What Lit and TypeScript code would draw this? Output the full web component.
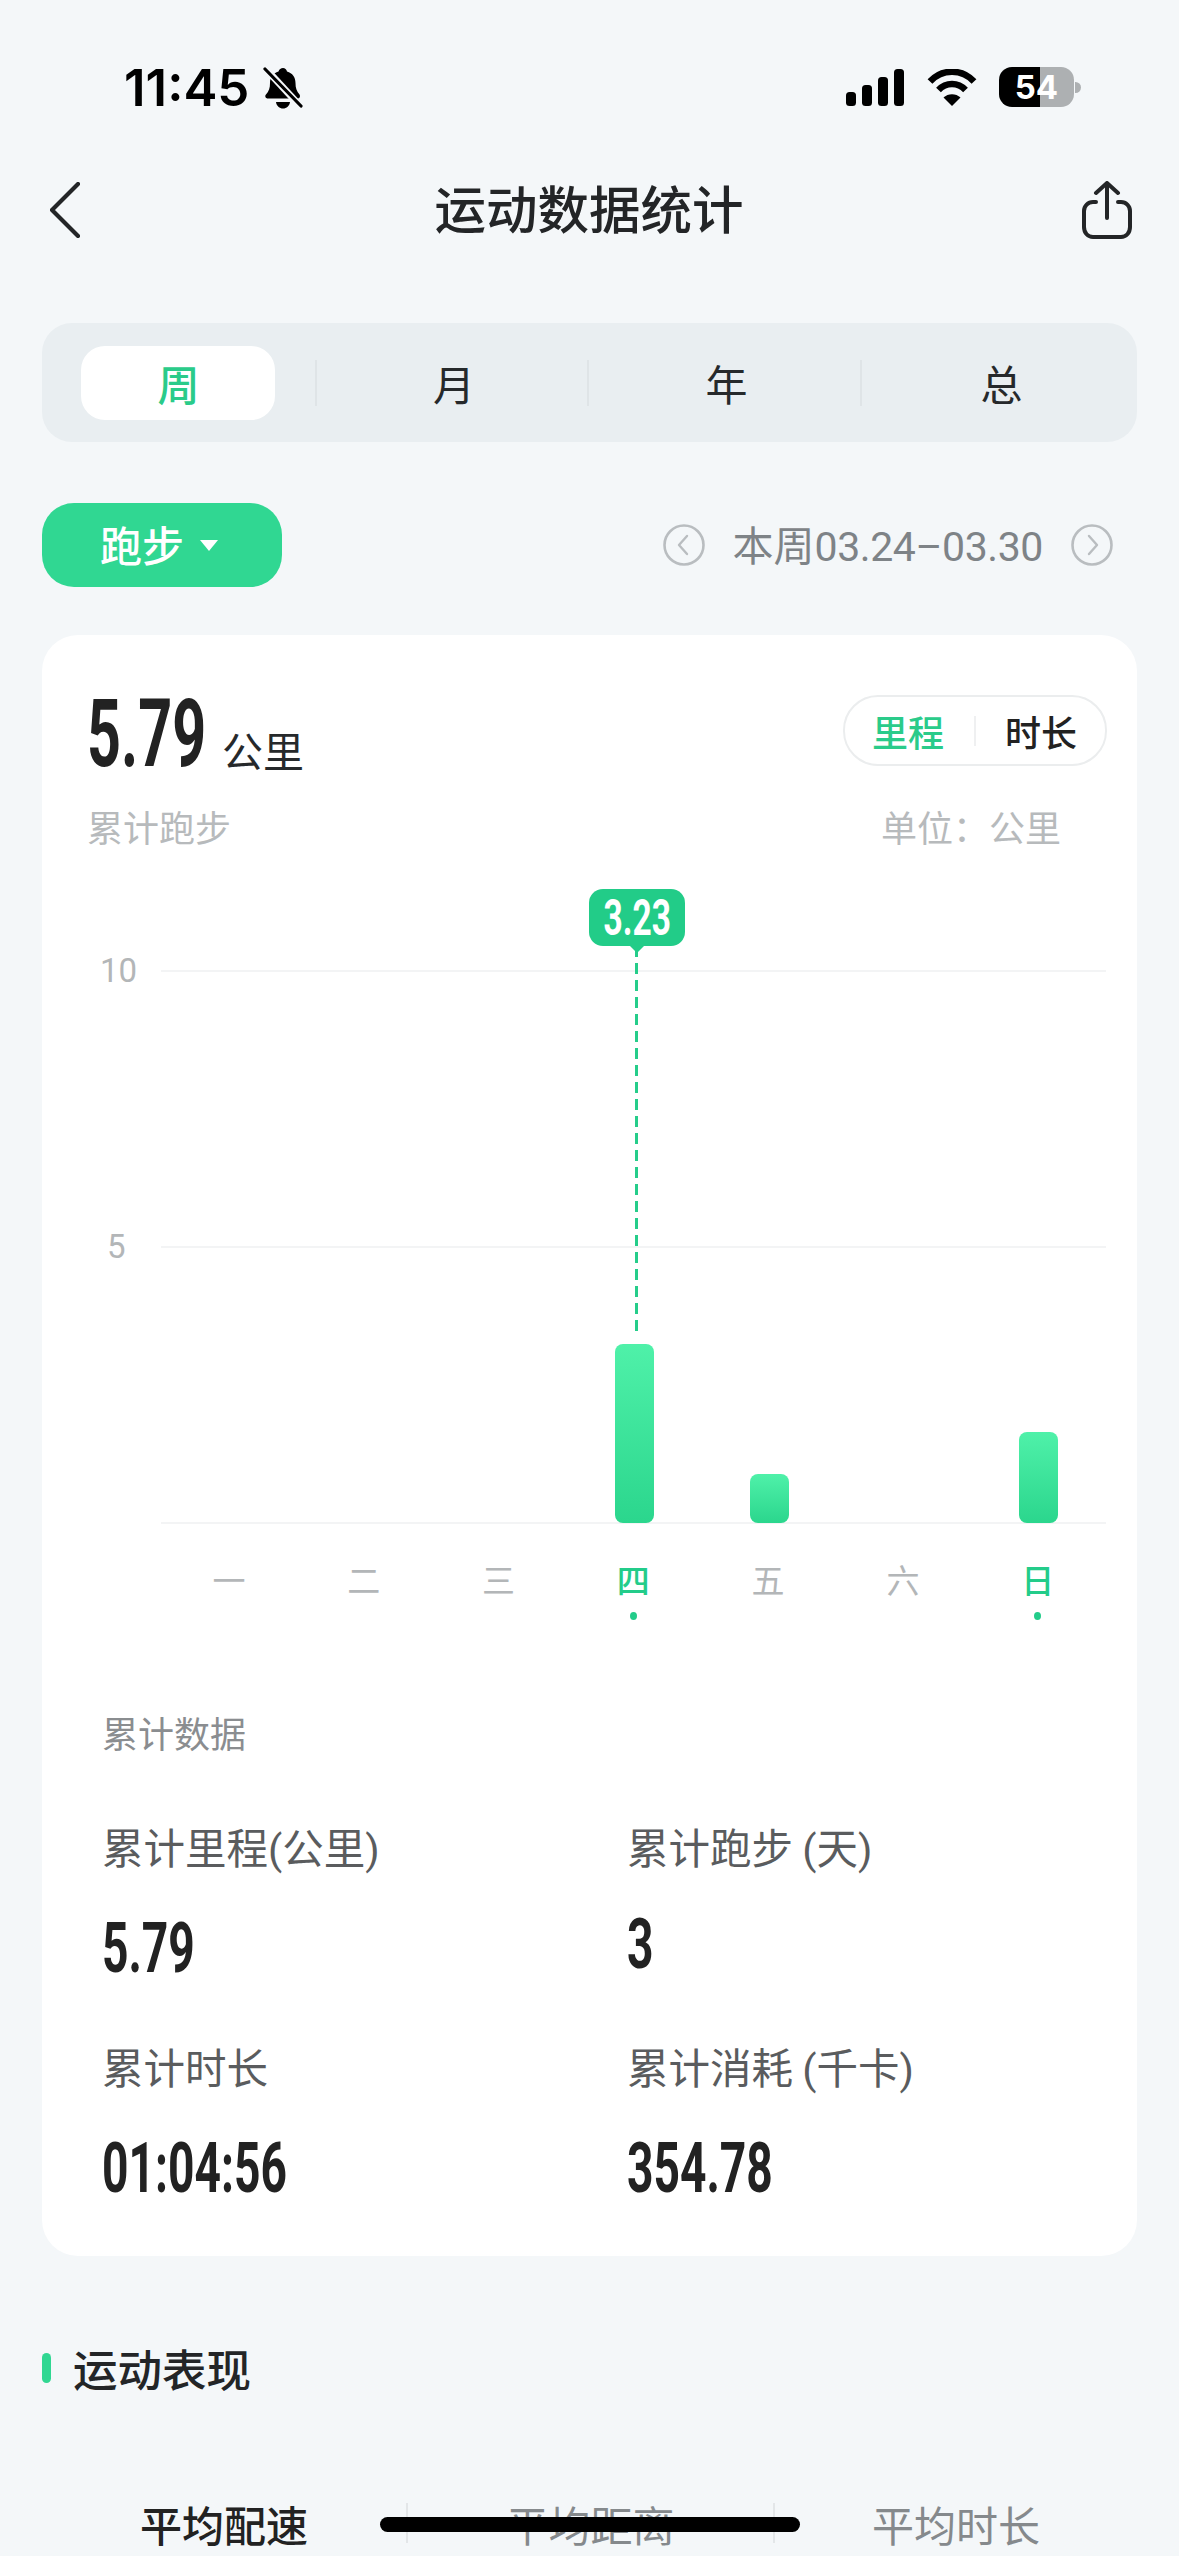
import { LitElement, html, css, svg } from "lit";
import { customElement } from "lit/decorators.js";

const bars: Record<number, number> = { 3: 179, 4: 49, 6: 91 };
const days = ["一", "二", "三", "四", "五", "六", "日"];

@customElement("app-root")
export class AppRoot extends LitElement {
  static styles = css`
    :host { display: block; width: 1179px; height: 2556px; overflow: hidden; position: relative; background: #f4f7f9;
      font-family: "Noto Sans CJK SC", "Inter", sans-serif; color: #222; }
    svg { display: block; }
    .status { height: 174px; box-sizing: border-box; padding: 67px 98px 0 124px; display: flex; justify-content: space-between; align-items: flex-start; }
    .st-left { display: flex; align-items: center; gap: 14px; height: 42px; }
    .time { font: 600 51px/42px "Inter", sans-serif; color: #000; }
    .st-right { display: flex; align-items: center; height: 40px; }
    .signal { margin-right: 23px; }
    .wifi { margin-right: 22px; }
    .batt { width: 75px; height: 40px; border-radius: 13px; background: linear-gradient(90deg, #000 0 41px, #adb0b2 41px); color: #fff;
      font: 700 33px/40px "Inter", sans-serif; text-align: center; }
    .tip { width: 6px; height: 11px; background: #adb0b2; border-radius: 0 6px 6px 0; margin-left: 1px; }

    .header { height: 72px; display: flex; align-items: center; justify-content: space-between; padding: 0 47px 0 50px; }
    .title { font-size: 51.5px; font-weight: 500; line-height: 66px; margin: 0 0 6px 16px; color: #232527; }

    .seg { margin: 77px 42px 0; height: 119px; border-radius: 30px; background: #e9eef1; display: grid; grid-template-columns: 273px 272px 273px 1fr; align-items: center; position: relative; }
    .seg-item { display: flex; align-items: center; justify-content: center; font-size: 42px; height: 46px; color: #26292b; border-left: 2px solid #dfe4e7; }
    .seg-item span { position: relative; left: 2px; }
    .seg-item:first-child { border-left: 0; position: relative; color: #2acb8a; font-weight: 500; }
    .seg-item:first-child span { left: 0; }
    .seg-item:first-child::before { content: ""; position: absolute; left: 39px; top: -14px; width: 194px; height: 74px; border-radius: 24px; background: #fff; }

    .tools { margin: 61px 42px 0; height: 84px; display: flex; justify-content: space-between; align-items: center; }
    .run { width: 240px; height: 84px; box-sizing: border-box; padding: 0 6px 3px 0; border-radius: 32px; background: #30d792; color: #fff; display: flex; align-items: center; justify-content: center; gap: 16px; font-size: 42px; font-weight: 500; }
    .caret { width: 0; height: 0; border-left: 9px solid transparent; border-right: 9px solid transparent; border-top: 11px solid #fff; margin-top: 3px; }
    .date { display: flex; align-items: center; margin-right: 24px; color: #7e8387; }
    .date-t { font: 400 41px/1 "Roboto", "Noto Sans CJK SC", sans-serif; margin: 0 28px; white-space: nowrap; letter-spacing: -0.4px; }
    .date-t b { font: 400 41px/1 "Noto Sans CJK SC", sans-serif; letter-spacing: 0; }

    .card { margin: 48px 42px 0; height: 1621px; border-radius: 36px; background: #fff; position: relative; box-sizing: border-box; }
    .cond { display: block; font-family: "Roboto", sans-serif; font-weight: 700; transform: scaleX(0.65); transform-origin: left center; color: #222; white-space: nowrap; }
    .head { display: flex; justify-content: space-between; padding: 60px 30px 0 45px; align-items: flex-start; height: 71px; }
    .big { display: flex; align-items: flex-end; }
    .big .cond { font-size: 94px; line-height: 72px; width: 135px; transform: translateY(3px) scaleX(0.63); }
    .unit { font-size: 41px; line-height: 44px; color: #26292b; margin-bottom: -4px; }
    .toggle { width: 264px; height: 71px; box-sizing: border-box; border: 2px solid #ebedee; border-radius: 35px; display: flex; align-items: center; padding-left: 27px; font-size: 36px; font-weight: 500; }
    .toggle .on { color: #2acb8a; }
    .toggle i { width: 2px; height: 30px; background: #eff0f1; margin: 0 29px 0 30px; }
    .sub { display: flex; justify-content: space-between; padding: 38px 76px 0 45px; font-size: 36px; line-height: 44px; color: #b7babc; }
    .chart { position: relative; margin-top: 123px; height: 552px; }
    .row { display: flex; align-items: flex-start; height: 276px; }
    .ylab { width: 119px; box-sizing: border-box; padding-left: 58px; height: 0; font: 400 33px/0 "Roboto", sans-serif; color: #b3b6b8; }
    .ylab.five { padding-left: 65px; }
    .line { height: 2px; background: #f3f4f5; width: 945px; margin-top: -1px; }
    .base { display: flex; padding-left: 119px; }
    .overlay { position: absolute; left: 119px; bottom: 0; width: 945px; height: 552px; display: grid; grid-template-columns: repeat(7, 134.8px); margin-left: 2px; align-items: end; }
    .slot { display: flex; justify-content: center; margin-left: -1px; }
    .bar { width: 39px; border-radius: 8px; background: linear-gradient(180deg, #4ff1a9, #2bd68d); }
    .dash { position: absolute; left: 593px; top: -25px; height: 391px; width: 3px; background: repeating-linear-gradient(180deg, #25cd8a 0 11px, transparent 11px 17px); }
    .bubble { position: absolute; left: 547px; top: -82px; width: 96px; height: 57px; border-radius: 14px; background: #22cc88; color: #fff; display: flex; align-items: center; justify-content: center; }
    .bubble::after { content: ""; position: absolute; left: 40px; bottom: -7px; width: 0; height: 0; border-left: 8px solid transparent; border-right: 8px solid transparent; border-top: 8px solid #22cc88; }
    .bubble span { display: block; font: 700 50px/1 "Roboto", sans-serif; transform: scaleX(0.67); white-space: nowrap; }
    .days { display: grid; grid-template-columns: repeat(7, 134.8px); margin: 34px 0 0 120px; }
    .day { display: flex; flex-direction: column; align-items: center; font-size: 33px; line-height: 44px; color: #b3b6b8; margin-left: -1px; height: 63px; position: relative; }
    .day.on { color: #23cc8a; font-weight: 500; }
    .day.on::after { content: ""; position: absolute; top: 55px; width: 7px; height: 8px; border-radius: 50%; background: #23cc8a; }
    .sum-t { margin: 90px 0 0 60px; font-size: 36px; line-height: 44px; color: #8a8d90; }
    .stats { display: grid; grid-template-columns: 525px 1fr; padding: 67px 0 0 60px; }
    .stat { height: 220px; }
    .lab { font-size: 41.5px; line-height: 50px; height: 50px; color: #5a5c5e; white-space: nowrap; }
    .lab span { font-family: "Roboto", sans-serif; }
    .stat .cond { font-size: 71px; line-height: 60px; margin-top: 47px; }
    .stat .cond.up { margin-top: 43px; }

    .sec { margin: 85px 0 0 42px; display: flex; align-items: center; gap: 22px; height: 54px; }
    .sec i { width: 9px; height: 30px; border-radius: 5px; background: #30d792; }
    .sec span { font-size: 44.5px; font-weight: 500; color: #232527; line-height: 54px; }
    .tabs { display: grid; grid-template-columns: 364px 367px 1fr; margin: 108px 42px 0 42px; font-size: 42px; color: #85898c; }
    .tabs div { height: 40px; display: flex; align-items: center; justify-content: center; border-left: 2px solid #e3e6e8; }
    .tabs div:first-child { border-left: 0; color: #222; font-weight: 500; }
    .homebar { position: absolute; left: 380px; top: 2517px; width: 420px; height: 15px; border-radius: 8px; background: #000; }
  `;

  render() {
    const circle = (left: boolean) => svg`<svg width="42" height="42" viewBox="0 0 42 42" fill="none"><circle cx="21" cy="21" r="19.5" stroke="#b9bdc0" stroke-width="2.6"/><path d="${left ? "M24 12 L16 21 L24 30" : "M18 12 L26 21 L18 30"}" stroke="#b9bdc0" stroke-width="2.4" stroke-linecap="round" stroke-linejoin="round"/></svg>`;
    return html`
      <div class="status">
        <div class="st-left">
          <span class="time">11:45</span>
          <svg width="40" height="42" viewBox="0 0 40 42"><path d="M20 1c2 0 3.500 1.500 4 3.500 5.500 1.500 8.500 6 8.500 11.500 0 5 1 8 4 11.500 1 1.500 .5 4-2 4H5c-2.500 0-3.500-2.500-2-4 3-3.500 4-6.500 4-11.500 0-5.500 3-10 8.500-11.500C16 2.500 18 1 20 1z" fill="#000"/><path d="M13 35h14c-.5 4-3.500 6.500-7 6.500S13.500 39 13 35z" fill="#000"/><path d="M1 0 L39 41" stroke="#f4f7f9" stroke-width="7"/><path d="M2 2 L38 39" stroke="#000" stroke-width="3.200" stroke-linecap="round"/></svg>
        </div>
        <div class="st-right">
          <svg class="signal" width="58" height="37" viewBox="0 0 58 37" fill="#000"><rect x="0" y="23" width="10" height="14" rx="3.500"/><rect x="16" y="16" width="10" height="21" rx="3.500"/><rect x="32" y="8" width="10" height="29" rx="3.500"/><rect x="48" y="0" width="10" height="37" rx="3.500"/></svg>
          <svg class="wifi" width="50" height="37" viewBox="0 0 50 37" fill="none" stroke="#000"><path d="M3 12.500C15-.5 35-.5 47 12.500" stroke-width="6.500"/><path d="M11.500 21C19 13 31 13 38.500 21" stroke-width="6.500"/><path d="M25 37 L16.500 28.500C21 24 29 24 33.500 28.500Z" fill="#000" stroke="none"/></svg>
          <div class="batt">54</div><div class="tip"></div>
        </div>
      </div>
      <div class="header">
        <svg width="30" height="56" viewBox="0 0 30 56" fill="none"><path d="M28 2 L2 28 L28 54" stroke="#232527" stroke-width="4.200" stroke-linecap="round" stroke-linejoin="round"/></svg>
        <div class="title">运动数据统计</div>
        <svg width="50" height="58" viewBox="0 0 50 58" fill="none" stroke="#232527" stroke-width="4" stroke-linecap="round" stroke-linejoin="round"><path d="M25 3 V37"/><path d="M14 12 L25 2 L36 12"/><path d="M14 21 H11 C6 21 2 25 2 30 V46 C2 52 6 56 11 56 H39 C44 56 48 52 48 46 V30 C48 25 44 21 39 21 H36"/></svg>
      </div>
      <div class="seg">
        ${["周", "月", "年", "总"].map((t) => html`<div class="seg-item"><span>${t}</span></div>`)}
      </div>
      <div class="tools">
        <div class="run"><span>跑步</span><i class="caret"></i></div>
        <div class="date">${circle(true)}<span class="date-t"><b>本周</b>03.24–03.30</span>${circle(false)}</div>
      </div>
      <div class="card">
        <div class="head">
          <div class="big"><span class="cond">5.79</span><span class="unit">公里</span></div>
          <div class="toggle"><span class="on">里程</span><i></i><span>时长</span></div>
        </div>
        <div class="sub"><span>累计跑步</span><span>单位：公里</span></div>
        <div class="chart">
          <div class="row"><div class="ylab">10</div><div class="line"></div></div>
          <div class="row"><div class="ylab five">5</div><div class="line"></div></div>
          <div class="base"><div class="line"></div></div>
          <div class="overlay">
            ${days.map((_, i) => html`<div class="slot">${bars[i] ? html`<div class="bar" style="height:${bars[i]}px"></div>` : ""}</div>`)}
          </div>
          <div class="dash"></div>
          <div class="bubble"><span>3.23</span></div>
        </div>
        <div class="days">
          ${days.map((d, i) => html`<div class="day ${i === 3 || i === 6 ? "on" : ""}">${d}</div>`)}
        </div>
        <div class="sum-t">累计数据</div>
        <div class="stats">
          <div class="stat"><div class="lab">累计里程<span>(</span>公里<span>)</span></div><span class="cond">5.79</span></div>
          <div class="stat"><div class="lab">累计跑步 <span>(</span>天<span>)</span></div><span class="cond up">3</span></div>
          <div class="stat"><div class="lab">累计时长</div><span class="cond">01:04:56</span></div>
          <div class="stat"><div class="lab">累计消耗 <span>(</span>千卡<span>)</span></div><span class="cond">354.78</span></div>
        </div>
      </div>
      <div class="sec"><i></i><span>运动表现</span></div>
      <div class="tabs"><div>平均配速</div><div>平均距离</div><div>平均时长</div></div>
      <div class="homebar"></div>
    `;
  }
}
